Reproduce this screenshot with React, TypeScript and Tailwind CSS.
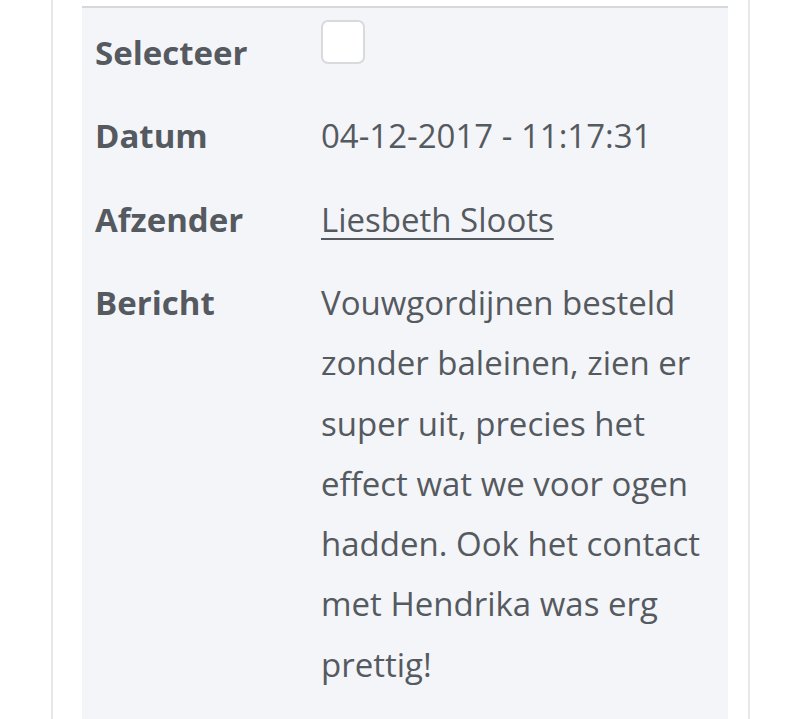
const rows = [
  { label: "Datum", value: "04-12-2017 - 11:17:31" },
];

export default function App() {
  return (
    <div
      className="w-[800px] h-[719px] bg-white overflow-hidden"
      style={{ fontFamily: "'Open Sans', 'Noto Sans', sans-serif" }}
    >
      <div className="ml-[51px] w-[699px] h-full border-x-2 border-[#e8e8ec] pl-[29px] pr-[20px] pt-[6px]">
        <div className="h-full bg-[#f4f5f9] border-t-2 border-[#d7d8dc] pl-[13px] pr-[8px] text-[#555a60] text-[33px]">
          <div className="grid grid-cols-[226px_1fr]">
            <div className="font-bold h-[84px] leading-[60px] pt-[15px]">Selecteer</div>
            <div className="h-[84px] pt-[12px]">
              <div className="w-[44px] h-[44px] bg-white border-2 border-[#d9dadd] rounded-[7px]" />
            </div>
            {rows.map((r) => (
              <>
                <div key={r.label} className="font-bold h-[84px] leading-[60px] pt-[14px]">{r.label}</div>
                <div className="h-[84px] leading-[60px] pt-[14px]">{r.value}</div>
              </>
            ))}
            <div className="font-bold h-[84px] leading-[60px] pt-[14px]">Afzender</div>
            <div className="h-[84px] leading-[60px] pt-[14px]">
              <a href="#" className="underline underline-offset-[6px] decoration-2">Liesbeth Sloots</a>
            </div>
            <div className="font-bold leading-[60px] pt-[13px]">Bericht</div>
            <div className="leading-[60.3px] pt-[13px]">
              Vouwgordijnen besteld zonder baleinen, zien er super uit, precies het effect wat we voor ogen hadden. Ook het contact met Hendrika was erg prettig!
            </div>
          </div>
        </div>
      </div>
    </div>
  );
}
